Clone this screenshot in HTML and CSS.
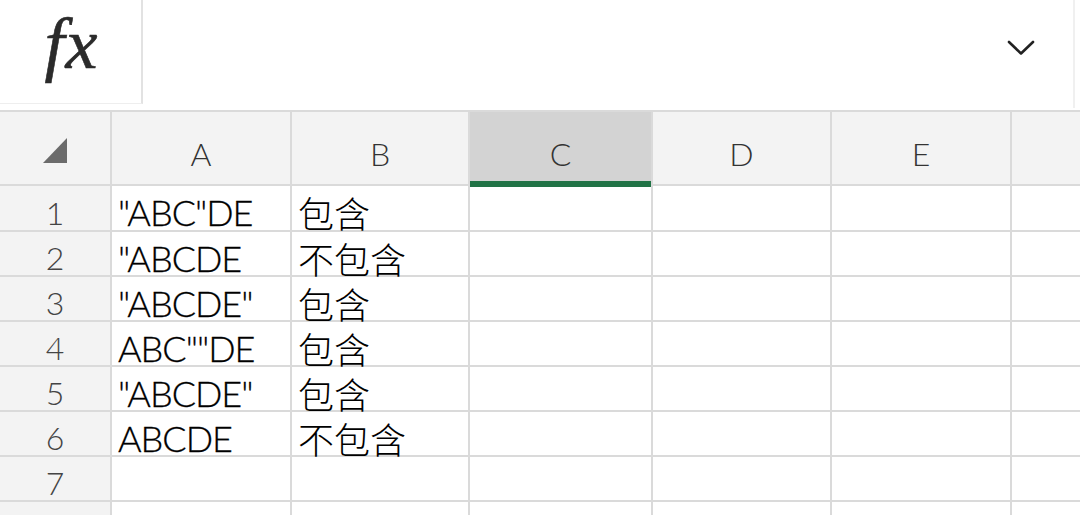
FILE: index.html
```html
<!DOCTYPE html>
<html lang="zh-CN">
<head>
    <meta charset="UTF-8">
    <title>Sheet</title>
    <link rel="stylesheet" href="styles.css">
</head>
<body>
    <div class="formula-bar">
        <div class="fx-box"><span class="fx">fx</span></div>
        <div class="formula-input"></div>
        <div class="expand">
            <svg width="28" height="16" viewBox="0 0 28 16">
                <polyline points="2,2 14,13.5 26,2" fill="none" stroke="#222" stroke-width="2.6" stroke-linecap="round" stroke-linejoin="round"/>
            </svg>
        </div>
    </div>

    <div class="sheet">
        <div class="corner">
            <svg width="24" height="25" viewBox="0 0 24 25"><polygon points="24,0 24,25 0,25" fill="#6b6b6b"/></svg>
        </div>
        <div class="col-head">A</div>
        <div class="col-head">B</div>
        <div class="col-head active">C</div>
        <div class="col-head">D</div>
        <div class="col-head">E</div>
        <div class="col-head"></div>

        <div class="row-head">1</div>
        <div class="cell">"ABC"DE</div>
        <div class="cell cjk">包含</div>
        <div class="cell"></div><div class="cell"></div><div class="cell"></div><div class="cell"></div>

        <div class="row-head">2</div>
        <div class="cell">"ABCDE</div>
        <div class="cell cjk">不包含</div>
        <div class="cell"></div><div class="cell"></div><div class="cell"></div><div class="cell"></div>

        <div class="row-head">3</div>
        <div class="cell">"ABCDE"</div>
        <div class="cell cjk">包含</div>
        <div class="cell"></div><div class="cell"></div><div class="cell"></div><div class="cell"></div>

        <div class="row-head">4</div>
        <div class="cell">ABC""DE</div>
        <div class="cell cjk">包含</div>
        <div class="cell"></div><div class="cell"></div><div class="cell"></div><div class="cell"></div>

        <div class="row-head">5</div>
        <div class="cell">"ABCDE"</div>
        <div class="cell cjk">包含</div>
        <div class="cell"></div><div class="cell"></div><div class="cell"></div><div class="cell"></div>

        <div class="row-head">6</div>
        <div class="cell">ABCDE</div>
        <div class="cell cjk">不包含</div>
        <div class="cell"></div><div class="cell"></div><div class="cell"></div><div class="cell"></div>

        <div class="row-head">7</div>
        <div class="cell"></div><div class="cell"></div>
        <div class="cell"></div><div class="cell"></div><div class="cell"></div><div class="cell"></div>

        <div class="row-head"></div>
        <div class="cell"></div><div class="cell"></div>
        <div class="cell"></div><div class="cell"></div><div class="cell"></div><div class="cell"></div>
    </div>
</body>
</html>
```

FILE: styles.css
```css
html, body {
    height: 100%;
}
body {
    margin: 0;
    background: #fff;
    font-family: "Noto Sans", "Noto Sans CJK SC", sans-serif;
    overflow: hidden;
}
.formula-bar {
    display: flex;
    height: 110px;
}
.fx-box {
    width: 141px;
    height: 103px;
    border-right: 2px solid #e2e2e2;
    border-bottom: 1px solid #eeeeee;
    display: flex;
    align-items: center;
    justify-content: center;
}
.fx {
    font-family: "Liberation Serif", serif;
    font-style: italic;
    font-size: 72px;
    color: #2b2b2b;
    -webkit-text-stroke: 0.6px #2b2b2b;
    letter-spacing: 1px;
    margin-top: -14px;
    margin-left: 2px;
}
.formula-input {
    flex: 1;
}
.expand {
    width: 106px;
    height: 108px;
    margin-right: 5px;
    border-right: 2px solid #f0f0f0;
    display: flex;
    align-items: center;
    justify-content: center;
    padding-bottom: 12px;
    box-sizing: border-box;
}
.sheet {
    display: grid;
    grid-template-columns: 110px 178px 176px 181px 177px 178px 1fr;
    grid-template-rows: 72px 44px repeat(7, 43px);
    gap: 2px;
    background: #dadada;
    border-top: 2px solid #dadada;
}
.corner,
.col-head,
.row-head {
    background: #f3f3f3;
    display: flex;
    align-items: center;
    justify-content: center;
    font-family: "Lato", "Noto Sans", sans-serif;
    font-weight: 300;
}
.corner {
    padding-top: 4px;
}
.col-head {
    color: #333;
    font-size: 32px;
    padding-top: 10px;
}
.col-head.active {
    background: #d3d3d3;
    position: relative;
}
.col-head.active::after {
    content: "";
    position: absolute;
    left: 0;
    right: 0;
    bottom: -3px;
    height: 6px;
    background: #217346;
}
.row-head {
    color: #444;
    font-size: 32px;
    padding-top: 8px;
}
.cell {
    background: #fff;
    color: #000;
    font-family: "Lato", "Noto Sans CJK SC", sans-serif;
    font-weight: 300;
    font-size: 36px;
    line-height: 36px;
    display: flex;
    align-items: center;
    padding: 8px 0 0 6px;
    white-space: nowrap;
    letter-spacing: -1px;
    -webkit-text-stroke: 0.3px #000;
}
.cell.cjk {
    font-family: "Noto Sans CJK SC", sans-serif;
    font-weight: 300;
    letter-spacing: 0;
    -webkit-text-stroke: 0;
}
```
